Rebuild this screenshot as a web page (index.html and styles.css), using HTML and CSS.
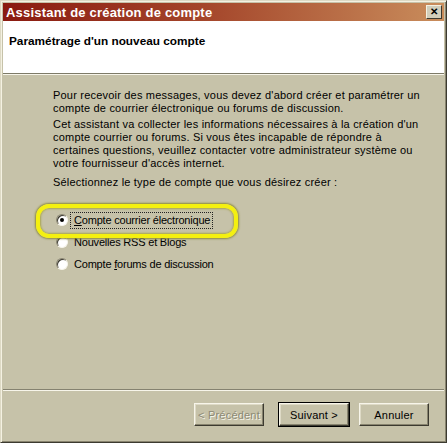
FILE: index.html
```html
<!DOCTYPE html>
<html lang="fr">
<head>
    <meta charset="UTF-8">
    <title>Assistant de création de compte</title>
    <link rel="stylesheet" href="styles.css">
</head>
<body>
    <div class="window">
        <div class="titlebar">
            <span class="title">Assistant de création de compte</span>
            <span class="close">&#x2715;</span>
        </div>
        <div class="header">
            <h1>Paramétrage d'un nouveau compte</h1>
        </div>
        <div class="content">
            <p>Pour recevoir des messages, vous devez d'abord créer et paramétrer un compte de courrier électronique ou forums de discussion.</p>
            <p>Cet assistant va collecter les informations nécessaires à la création d'un compte courrier ou forums. Si vous êtes incapable de répondre à certaines questions, veuillez contacter votre administrateur système ou votre fournisseur d'accès internet.</p>
            <p class="ask">Sélectionnez le type de compte que vous désirez créer :</p>

            <div class="options">
                <div class="option">
                    <span class="radio checked"></span>
                    <span class="label focus"><u>C</u>ompte courrier électronique</span>
                </div>
                <div class="option">
                    <span class="radio"></span>
                    <span class="label">Nouvelles RSS et Blogs</span>
                </div>
                <div class="option">
                    <span class="radio"></span>
                    <span class="label">Compte <u>f</u>orums de discussion</span>
                </div>
                <!-- surlignage jaune -->
                <div class="highlight"></div>
            </div>
        </div>
        <div class="footer">
            <button class="btn disabled">&lt; Précédent</button>
            <button class="btn default">Suivant &gt;</button>
            <button class="btn">Annuler</button>
        </div>
    </div>
</body>
</html>
```

FILE: styles.css
```css
body {
    margin: 0;
    font-family: "Liberation Sans", Arial, sans-serif;
    font-size: 11px;
    color: #000;
    background-color: #c6c2a9;
}
.window {
    width: 447px;
    height: 443px;
    box-sizing: border-box;
    display: flex;
    flex-direction: column;
    background-color: #c6c2a9;
    border: 1px solid;
    border-color: #ddd9c4 #3c3a30 #3c3a30 #ddd9c4;
    padding: 2px;
    box-shadow: inset 1px 1px #f4f1e2, inset -1px -1px #88846f;
}
.titlebar {
    height: 18px;
    display: flex;
    align-items: center;
    justify-content: space-between;
    padding: 0 2px 0 3px;
    background: linear-gradient(to right, #8a1a10 0%, #a4452a 45%, #c98d5c 100%);
}
.title {
    color: #fff;
    font-weight: bold;
    font-size: 13px;
    letter-spacing: 0.2px;
}
.close {
    width: 16px;
    height: 14px;
    box-sizing: border-box;
    display: flex;
    align-items: center;
    justify-content: center;
    background-color: #d2cebb;
    border: 1px solid;
    border-color: #f4f1e2 #3c3a30 #3c3a30 #f4f1e2;
    font-size: 10px;
    font-weight: bold;
    line-height: 1;
}
.header {
    height: 53px;
    background-color: #fff;
    border-bottom: 1px solid #7d7a68;
    padding: 13px 6px 0;
    box-sizing: border-box;
}
.header h1 {
    margin: 0;
    font-size: 11.8px;
    line-height: 14px;
    font-weight: bold;
}
.content {
    flex: 1;
    border-top: 1px solid #f7f5ea;
    padding: 14px 17px 0 50px;
    letter-spacing: 0.2px;
}
.content p {
    margin: 3px 0 0;
    line-height: 13px;
}
.content p:first-child {
    margin-top: 0;
}
.content p.ask {
    margin-top: 6px;
}
.options {
    position: relative;
    margin-top: 20px;
    letter-spacing: -0.2px;
}
.option {
    height: 22px;
    display: flex;
    align-items: center;
    padding-left: 3px;
}
.radio {
    position: relative;
    width: 12px;
    height: 12px;
    box-sizing: border-box;
    border-radius: 50%;
    background-color: #fff;
    border: 1px solid;
    border-color: #888470 #f6f4ea #f6f4ea #888470;
    box-shadow: inset 1px 1px #3c3a30;
}
.radio.checked::after {
    content: "";
    position: absolute;
    left: 3px;
    top: 3px;
    width: 4px;
    height: 4px;
    border-radius: 50%;
    background-color: #000;
}
.label {
    margin-left: 2px;
    padding: 1px 2px 2px 3px;
    border: 1px dotted transparent;
}
.label.focus {
    border-color: #222;
}
.highlight {
    position: absolute;
    left: -17px;
    top: -5px;
    width: 194px;
    height: 26px;
    border: 4px solid #f4f010;
    border-radius: 13px;
    box-shadow: 0 0 2px 1px #8e8c3c, inset 0 0 2px 1px #a9a650;
}
.footer {
    height: 51px;
    box-sizing: border-box;
    border-top: 1px solid #858270;
    box-shadow: inset 0 1px #f7f5ea;
    display: flex;
    justify-content: flex-end;
    align-items: flex-start;
    padding: 13px 15px 0 0;
}
.btn {
    width: 70px;
    height: 23px;
    margin-left: 10px;
    font-family: "Liberation Sans", Arial, sans-serif;
    font-size: 11px;
    letter-spacing: 0.2px;
    color: #000;
    background-color: #c6c2a9;
    border: 1px solid;
    border-color: #f7f5ea #3c3a30 #3c3a30 #f7f5ea;
    box-shadow: inset -1px -1px #88846f, inset 1px 1px #dedac6;
    padding: 0;
}
.btn.default {
    outline: 1px solid #000;
}
.btn.disabled {
    color: #8c8974;
    text-shadow: 1px 1px #f7f5ea;
    margin-right: 5px;
}
```
